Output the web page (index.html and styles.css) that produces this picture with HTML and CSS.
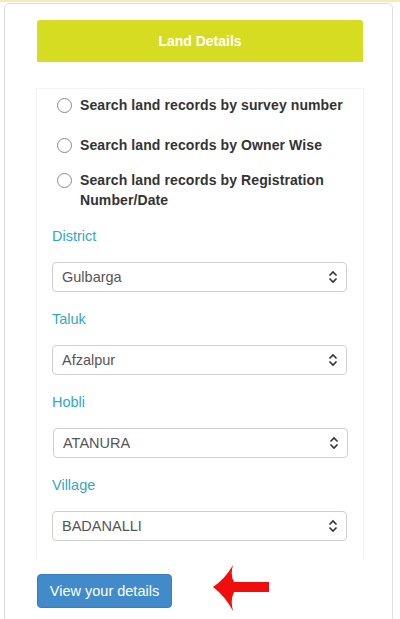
FILE: index.html
```html
<!DOCTYPE html>
<html>
<head>
<meta charset="utf-8">
<link rel="stylesheet" href="styles.css">
</head>
<body>
<div class="topline"></div>
<div class="card">
  <div class="card-head">Land Details</div>
  <div class="panel">
    <div class="radios">
      <label class="radio r1"><span class="dot"></span><span>Search land records by survey number</span></label>
      <label class="radio r2"><span class="dot"></span><span>Search land records by Owner Wise</span></label>
      <label class="radio r3"><span class="dot"></span><span>Search land records by Registration Number/Date</span></label>
    </div>
    <div class="group">
      <div class="lbl">District</div>
      <div class="select"><span>Gulbarga</span><svg class="chev" viewBox="0 0 10 14" width="10" height="14"><path d="M1.5 5.5 L5 2 L8.5 5.5 M1.5 8.5 L5 12 L8.5 8.5" fill="none" stroke="#333" stroke-width="1.6"/></svg></div>
    </div>
    <div class="group">
      <div class="lbl">Taluk</div>
      <div class="select"><span>Afzalpur</span><svg class="chev" viewBox="0 0 10 14" width="10" height="14"><path d="M1.5 5.5 L5 2 L8.5 5.5 M1.5 8.5 L5 12 L8.5 8.5" fill="none" stroke="#333" stroke-width="1.6"/></svg></div>
    </div>
    <div class="group">
      <div class="lbl">Hobli</div>
      <div class="select shift"><span>ATANURA</span><svg class="chev" viewBox="0 0 10 14" width="10" height="14"><path d="M1.5 5.5 L5 2 L8.5 5.5 M1.5 8.5 L5 12 L8.5 8.5" fill="none" stroke="#333" stroke-width="1.6"/></svg></div>
    </div>
    <div class="group">
      <div class="lbl">Village</div>
      <div class="select"><span>BADANALLI</span><svg class="chev" viewBox="0 0 10 14" width="10" height="14"><path d="M1.5 5.5 L5 2 L8.5 5.5 M1.5 8.5 L5 12 L8.5 8.5" fill="none" stroke="#333" stroke-width="1.6"/></svg></div>
    </div>
  </div>
  <div class="actions">
    <button class="btn">View your details</button>
    <svg class="arrow" viewBox="0 0 56 46" width="56" height="46"><path d="M0 22 Q12 14 20 0 Q17 10 21 17 L56 17 L56 27 L21 27 Q17 35 20 46 Q12 31 0 22 Z" fill="#f20d0d"/></svg>
  </div>
</div>
</body>
</html>
```

FILE: styles.css
```css
html, body {
  margin: 0;
  padding: 0;
  background: #fff;
}
body {
  font-family: "Liberation Sans", Arial, Helvetica, sans-serif;
  font-size: 14px;
  color: #333;
  width: 400px;
  height: 619px;
  overflow: hidden;
}
.topline {
  height: 2px;
  background: #f6eab8;
}
.card {
  margin: 1px 7px 0 4px;
  border: 1px solid #dedede;
  border-radius: 5px 5px 0 0;
  padding: 16px 29px 30px 32px;
  min-height: 640px;
  box-sizing: border-box;
}
.card-head {
  height: 42px;
  background: #d6dc22;
  border-radius: 3px 3px 0 0;
  color: #fff;
  font-weight: bold;
  font-size: 14px;
  display: flex;
  align-items: center;
  justify-content: center;
}
.panel {
  margin: 26px -1px 0 -1px;
  border: 1px solid #f3f3f3;
  border-bottom: none;
  padding: 6px 16px 18px 15px;
}
.radios {
  display: flex;
  flex-direction: column;
  padding-left: 5px;
}
.radio {
  display: flex;
  align-items: flex-start;
  gap: 8px;
  font-weight: bold;
  font-size: 14px;
  letter-spacing: 0.1px;
  line-height: 20px;
  color: #333;
}
.r2 { margin-top: 20px; }
.r3 { margin-top: 15px; }
.dot {
  flex: none;
  width: 13px;
  height: 13px;
  border: 1px solid #8a8a8a;
  border-radius: 50%;
  margin-top: 3px;
}
.group {
  margin-top: 16px;
}
.group + .group { margin-top: 17px; }
.lbl {
  color: #35a7c1;
  font-size: 14.5px;
  line-height: 20px;
}
.select {
  margin-top: 16px;
  height: 30px;
  border: 1px solid #cfcfcf;
  border-radius: 4px;
  box-sizing: border-box;
  display: flex;
  align-items: center;
  justify-content: space-between;
  padding: 0 8px 0 9px;
  color: #555;
  font-size: 14.5px;
}
.shift { margin-left: 1px; margin-right: -1px; }
.chev { display: block; }
.actions {
  display: flex;
  align-items: center;
  gap: 41px;
  margin-top: 11px;
}
.btn {
  width: 135px;
  height: 34px;
  background: #428bca;
  border: 1px solid #3b7dbb;
  border-radius: 4px;
  color: #fff;
  font-family: "Liberation Sans", Arial, Helvetica, sans-serif;
  font-size: 14.5px;
  padding: 0;
}
.arrow {
  display: block;
  margin-top: -5px;
}
```
